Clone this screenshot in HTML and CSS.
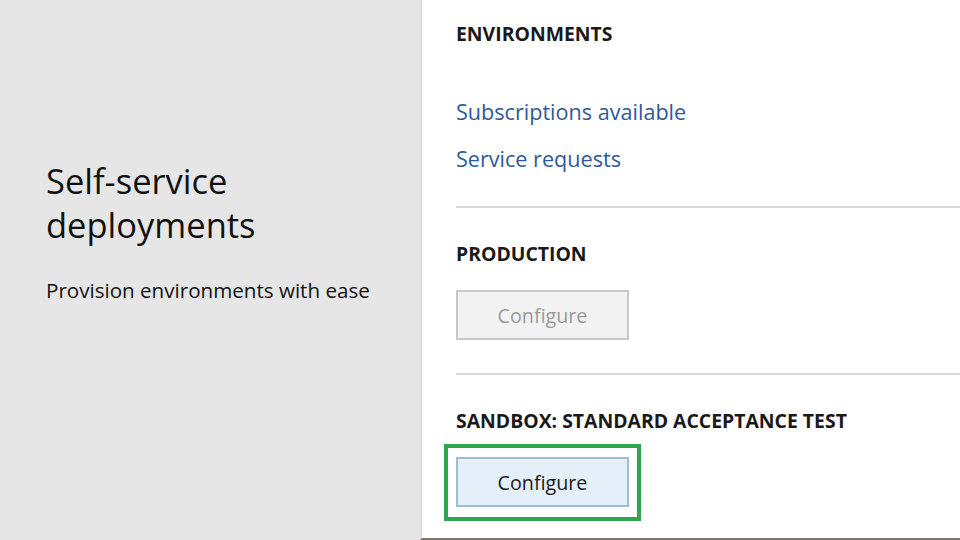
FILE: index.html
```html
<!DOCTYPE html>
<html>
<head>
<meta charset="utf-8">
<link rel="stylesheet" href="styles.css">
</head>
<body>
<div class="slide">
  <section class="intro">
    <h1 class="title">Self-service<br>deployments</h1>
    <p class="subtitle">Provision environments with ease</p>
  </section>
  <section class="panel">
    <h2 class="heading heading-env">ENVIRONMENTS</h2>
    <nav class="links">
      <a class="link">Subscriptions available</a>
      <a class="link">Service requests</a>
    </nav>
    <hr class="sep">
    <h2 class="heading">PRODUCTION</h2>
    <div class="btn-row">
      <button class="btn btn-disabled">Configure</button>
    </div>
    <hr class="sep">
    <h2 class="heading">SANDBOX: STANDARD ACCEPTANCE TEST</h2>
    <div class="highlight">
      <button class="btn btn-active">Configure</button>
    </div>
  </section>
</div>
</body>
</html>
```

FILE: styles.css
```css
html, body {
  margin: 0;
  padding: 0;
}
body {
  width: 960px;
  height: 540px;
  overflow: hidden;
  font-family: "Open Sans", "Noto Sans", sans-serif;
  background: #ffffff;
}
.slide {
  display: flex;
  width: 960px;
  height: 540px;
}
.intro {
  width: 420px;
  flex: none;
  background: #e6e6e6;
  padding: 159px 0 0 46px;
  box-sizing: border-box;
}
.title {
  margin: 0;
  font-weight: 400;
  font-size: 34.5px;
  line-height: 44px;
  color: #111111;
}
.subtitle {
  margin: 30px 0 0 0;
  font-size: 20.6px;
  line-height: 26px;
  color: #111111;
}
.panel {
  flex: 1;
  border-left: 2px solid #dcdcdc;
  border-bottom: 2px solid #7f766a;
  padding: 21px 0 0 34px;
  box-sizing: border-box;
}
.heading {
  margin: 0;
  font-size: 19.4px;
  font-weight: 700;
  line-height: 26px;
  color: #1a1a1a;
}
.links {
  display: flex;
  flex-direction: column;
  gap: 19px;
  margin-top: 51px;
}
.link {
  font-size: 21.6px;
  line-height: 28px;
  color: #2f5a9a;
}
.sep {
  margin: 33px 0 0 0;
  border: 0;
  border-top: 2px solid #d9d9d9;
  height: 0;
}
.sep + .heading {
  margin-top: 33px;
}
.btn-row {
  margin-top: 23px;
  margin-bottom: 1px;
}
.btn {
  display: block;
  width: 173px;
  height: 50px;
  font-family: inherit;
  font-size: 19.7px;
  box-sizing: border-box;
  padding: 0;
}
.btn-disabled {
  background: #f2f2f2;
  border: 2px solid #c8c8c8;
  color: #9a9a9a;
}
.btn-active {
  background: #e4eff9;
  border: 2px solid #a3bcd6;
  color: #1a1a1a;
}
.highlight {
  margin: 10px 0 0 -12px;
  width: 197px;
  height: 77px;
  border: 4px solid #2ea64f;
  box-sizing: border-box;
  padding: 9px 0 0 8px;
}
```
